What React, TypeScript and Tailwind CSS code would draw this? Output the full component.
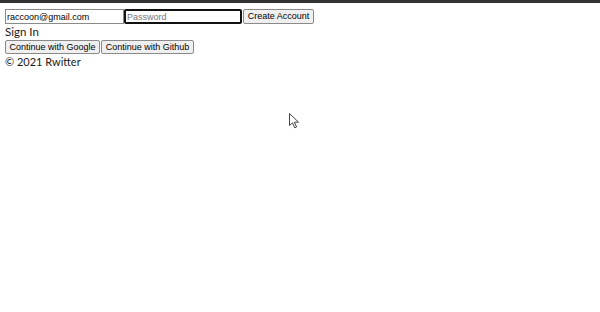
const btn =
  "h-[14px] px-0 bg-[#efefef] border border-[#8a8a8a] rounded-[2px] font-['Liberation_Sans',sans-serif] text-[9px] text-black leading-none whitespace-nowrap"

export default function App() {
  return (
    <div className="relative w-[600px] h-[312px] bg-white overflow-hidden">
      <div className="h-[3px] bg-[#333333]" />
      <div className="pl-[5px] pt-[6px] font-['Lato',sans-serif] text-[11.5px] text-[#1a1a1a] leading-[14px]">
        <form className="flex h-[15px]" onSubmit={(e) => e.preventDefault()}>
          <input
            defaultValue="raccoon@gmail.com"
            className="w-[119px] h-[15px] px-[1px] border border-[#8a8a8a] font-['Liberation_Sans',sans-serif] text-[9px] text-black outline-none"
          />
          <input
            placeholder="Password"
            className="w-[118px] h-[15px] px-[1px] border-2 border-[#111] rounded-[2px] font-['Liberation_Sans',sans-serif] text-[9px] placeholder:text-[#777] outline-none"
          />
          <button className={`ml-[1px] w-[71px] h-[15px] ${btn}`}>Create Account</button>
        </form>
        <div className="mt-[1px] h-[14px]">Sign In</div>
        <div className="flex mt-[1px] h-[14px]">
          <button className={`w-[95px] ${btn}`}>Continue with Google</button>
          <button className={`ml-[1px] w-[93px] ${btn}`}>Continue with Github</button>
        </div>
        <div className="mt-[1px] h-[14px] text-[11px]">© 2021 Rwitter</div>
      </div>
      <svg className="absolute left-[289px] top-[113px]" width="11" height="16" viewBox="0 0 11 16">
        <path d="M0.5 0.5 L0.5 12.5 L3.5 9.8 L5.8 14.8 L7.6 14 L5.4 9.2 L9.5 9.2 Z" fill="white" stroke="#444" strokeWidth="1" />
      </svg>
    </div>
  )
}
